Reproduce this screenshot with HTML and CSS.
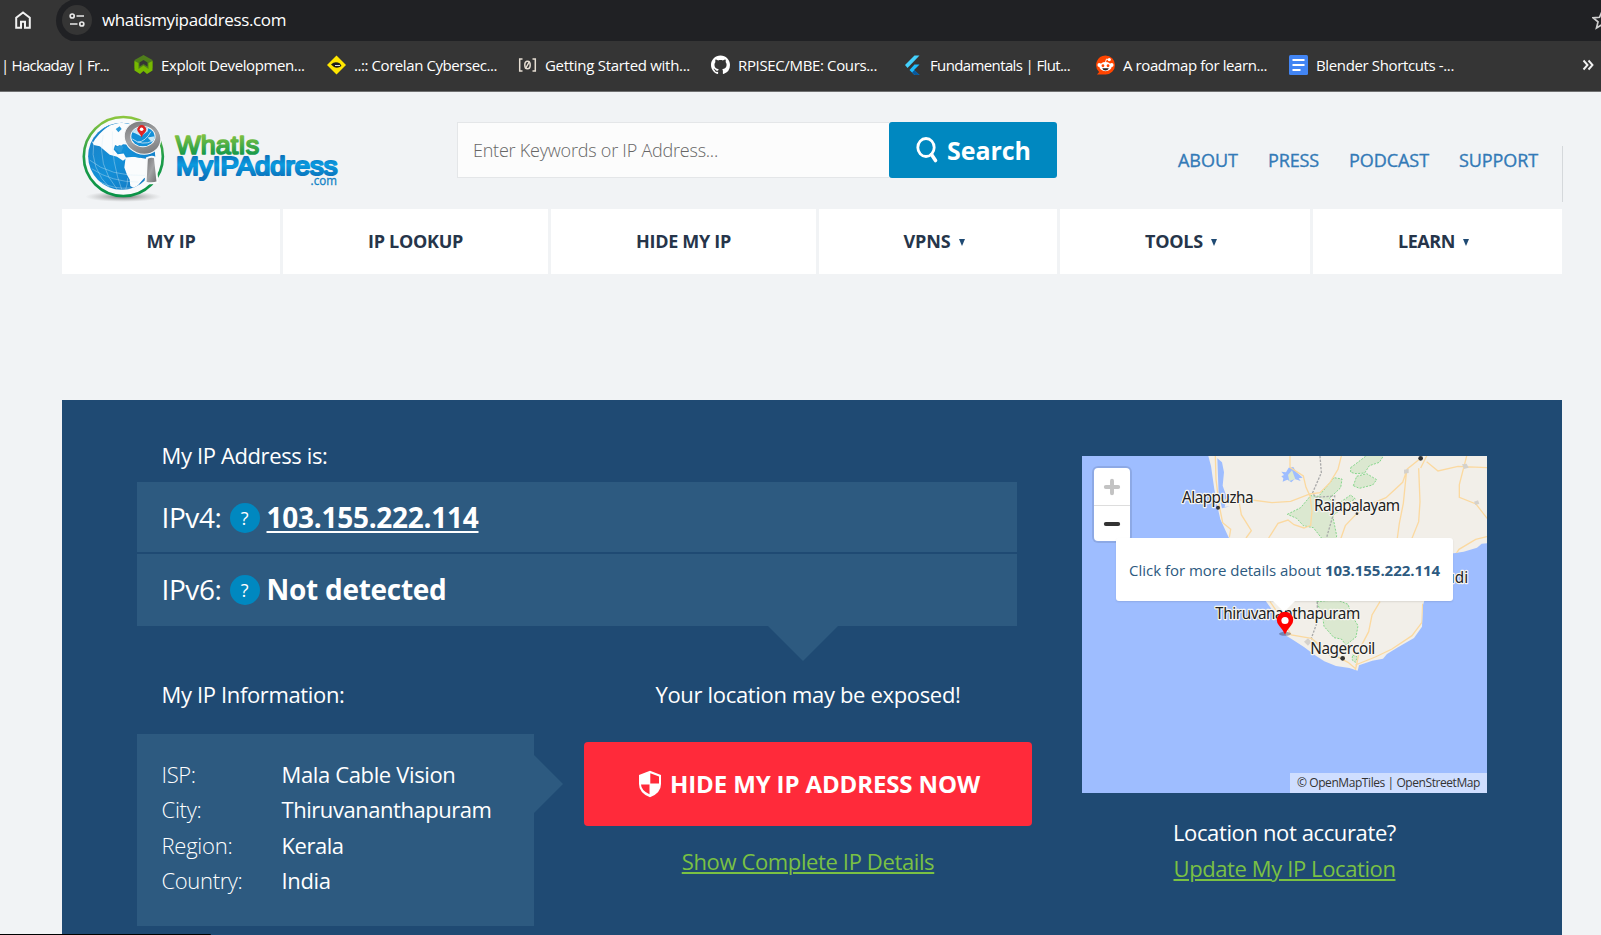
FILE: index.html
```html
<!DOCTYPE html>
<html lang="en">
<head>
<meta charset="utf-8">
<title>What Is My IP Address</title>
<link rel="stylesheet" href="styles.css">
</head>
<body>
<div class="toolbar">
  <svg class="home" viewBox="0 0 16 18"><path d="M1.2 16.8V6.8L8 1.5l6.800 5.300v10H10v-6H6v6z" fill="none" stroke="#f1f1f1" stroke-width="2"/></svg>
  <div class="omnibox">
    <span class="chip"><svg width="16" height="16" viewBox="0 0 16 16" fill="none" stroke="#e8e8e8" stroke-width="1.700"><circle cx="3.200" cy="4" r="2"/><path d="M7.500 4H15M1 12h7.500"/><circle cx="12.800" cy="12" r="2"/></svg></span>
    <span class="url"><span data-w="184">whatismyipaddress.com</span></span>
    <svg class="star" viewBox="0 0 20 20"><path d="M10 1.500l2.500 5.800 6.300.5-4.800 4.100 1.500 6.100L10 14.700 4.500 18 6 11.900 1.200 7.800l6.300-.5z" fill="none" stroke="#cfcfcf" stroke-width="1.700"/></svg>
  </div>
</div>
<div class="bookmarks">
  <div class="bm first"><span data-w="108">| Hackaday | Fr...</span></div>
  <div class="bm"><svg viewBox="0 0 19 20"><path d="M9.500 0L18.500 5v8l-4 3-5-5-5 5-4-3V5z" fill="#4f7d1b"/><path d="M.5 6L4.500 8v6l5-3.500 5 3.500V8l4-2v9.500L13 19l-3.500-3L6 19 .5 15.500z" fill="#77b900"/><path d="M5.500 7.500l4-2.500 4 2.500v4l-4-2.500-4 2.500z" fill="#353535"/></svg><span data-w="143.5">Exploit Developmen...</span></div>
  <div class="bm"><svg viewBox="0 0 19 20"><path d="M9.500.5L19 10l-9.500 9.500L0 10z" fill="#ffe600"/><path d="M4 9.500q4-4 9-1l1.500 2.500q-4 3-7.500 1z" fill="#1d1d1d"/><path d="M8 10.500h5" stroke="#ddd"/></svg><span data-w="143">..:: Corelan Cybersec...</span></div>
  <div class="bm"><svg viewBox="0 0 19 20" fill="none" stroke="#e6ded3" stroke-width="1.500"><path d="M4.500 4H1.700v12h2.800M14.500 4h2.800v12h-2.800M11.500 6.500l-4 7"/><ellipse cx="9.500" cy="10" rx="2.700" ry="3.800"/></svg><span data-w="145">Getting Started with...</span></div>
  <div class="bm"><svg viewBox="0 0 16 16"><path fill="#fff" d="M8 0C3.580 0 0 3.580 0 8c0 3.540 2.290 6.530 5.470 7.590.4.070.55-.17.55-.38 0-.19-.01-.82-.01-1.490-2.010.37-2.530-.49-2.690-.94-.09-.23-.48-.94-.82-1.130-.28-.15-.68-.52-.01-.53.63-.01 1.080.58 1.230.82.72 1.210 1.870.87 2.330.66.070-.52.28-.87.51-1.070-1.780-.2-3.640-.89-3.640-3.950 0-.87.31-1.590.82-2.150-.08-.2-.36-1.020.08-2.120 0 0 .67-.21 2.200.82.64-.18 1.320-.27 2-.27s1.360.09 2 .27c1.530-1.040 2.200-.82 2.200-.82.44 1.100.16 1.920.08 2.120.51.56.82 1.270.82 2.150 0 3.070-1.870 3.750-3.650 3.950.29.25.54.73.54 1.480 0 1.070-.01 1.930-.01 2.200 0 .21.15.46.55.38A8 8 0 0 0 16 8c0-4.420-3.580-8-8-8z"/></svg><span data-w="139">RPISEC/MBE: Cours...</span></div>
  <div class="bm flut"><svg viewBox="0 0 19 20"><path d="M11.500.5h5L4.500 13 2 10z" fill="#44d1fd"/><path d="M11.500 9.500h5L11 15l5.500 5h-5L6.500 15z" fill="#1fbcfd"/><path d="M9 17.500l2.500-2.500 5 5h-5z" fill="#08589c"/></svg><span data-w="140">Fundamentals | Flut...</span></div>
  <div class="bm"><svg viewBox="0 0 20 20"><path d="M10 0a10 10 0 0 1 0 20H1l2.300-2.700A10 10 0 0 1 10 0z" fill="#ff4500"/><circle cx="3.500" cy="10" r="2" fill="#fff"/><circle cx="16.500" cy="10" r="2" fill="#fff"/><circle cx="14" cy="4.300" r="1.700" fill="#fff"/><path d="M10 7l1-3.200 2.500.5" stroke="#fff" fill="none"/><ellipse cx="10" cy="11.700" rx="6.500" ry="4.800" fill="#fff"/><circle cx="7.300" cy="10.800" r="1.500" fill="#ff4500"/><circle cx="12.700" cy="10.800" r="1.500" fill="#ff4500"/><path d="M6.500 13.500h7q-1 2.300-3.500 2.300t-3.500-2.300z" fill="#222"/></svg><span data-w="144">A roadmap for learn...</span></div>
  <div class="bm"><svg viewBox="0 0 19 20"><rect width="19" height="20" rx="1.500" fill="#4285f4"/><path d="M3.500 5h12M3.500 10h12M3.500 15h8" stroke="#fff" stroke-width="2.200"/></svg><span data-w="138">Blender Shortcuts -...</span></div>
  <svg class="more" viewBox="0 0 12 12"><path d="M1.500 1.500L5.500 6l-4 4.500M6.500 1.500l4 4.500-4 4.500" fill="none" stroke="#f1f1f1" stroke-width="1.900"/></svg>
</div>

<div class="page">
  <header class="header">
    <svg class="logo" viewBox="90 60 780 265">
      <defs>
        <linearGradient id="ring" x1="0" y1="0" x2="0" y2="1"><stop offset="0" stop-color="#8cc63f"/><stop offset=".5" stop-color="#1f9d4a"/><stop offset="1" stop-color="#0a9347"/></linearGradient>
        <linearGradient id="sea" x1="0" y1="0" x2="1" y2="1"><stop offset="0" stop-color="#1c7fc4"/><stop offset=".5" stop-color="#1390d8"/><stop offset="1" stop-color="#1473bd"/></linearGradient>
        <linearGradient id="grn" gradientUnits="userSpaceOnUse" x1="0" y1="117" x2="0" y2="180"><stop offset="0" stop-color="#86c440"/><stop offset="1" stop-color="#14984a"/></linearGradient>
        <linearGradient id="blu" gradientUnits="userSpaceOnUse" x1="0" y1="184" x2="0" y2="258"><stop offset="0" stop-color="#0b75bd"/><stop offset=".35" stop-color="#0a9be0"/><stop offset=".85" stop-color="#0b72bb"/></linearGradient>
        <linearGradient id="gry" x1="0" y1="0" x2="1" y2="1"><stop offset="0" stop-color="#6f7072"/><stop offset=".5" stop-color="#a3a4a6"/><stop offset="1" stop-color="#6b6c6e"/></linearGradient>
        <radialGradient id="shd"><stop offset="0" stop-color="#555" stop-opacity=".8"/><stop offset="1" stop-color="#999" stop-opacity="0"/></radialGradient>
        <clipPath id="gl"><circle cx="214" cy="184" r="101"/></clipPath>
        <clipPath id="lens"><ellipse cx="278" cy="125" rx="35" ry="29"/></clipPath>
      </defs>
      <ellipse cx="219" cy="306" rx="115" ry="16" fill="url(#shd)"/>
      <circle cx="219" cy="185" r="119" fill="#f8fafb" stroke="url(#ring)" stroke-width="8"/>
      <circle cx="214" cy="184" r="101" fill="url(#sea)"/>
      <g clip-path="url(#gl)">
        <path d="M128 143Q140 118 176 92L210 82l40 8v60l-32-2-10 8-14-6-4 14 12 14 18-2 8 14-10 8-18-12-22-6-16-14-14-12-18-4-8-14z" fill="#fafcfd"/>
        <path d="M226 188l26-2 34 6 40 10v40l-44 8-28 32-14-8-2-20-8-14-8-22z" fill="#fafcfd"/>
        <path d="M196 102l12-8 6 8-10 10zM190 160l18-10 18 8-4 12-14 4z" fill="#2b9bd9"/>
        <path d="M216 172l6-14 8 22 40 6" fill="none" stroke="#1390d8" stroke-width="6"/>
        <path d="M120 138q20-34 56-46" fill="none" stroke="#2b9bd9" stroke-width="4"/>
        <g fill="none" stroke="#d4ecf8" stroke-width="1.600" opacity=".7"><path d="M118 196q60 50 170 46M124 222q60 40 140 40M150 262q40 22 90 18M130 140q-14 80 52 144M158 120q-20 90 44 166M186 110q-4 90 30 180M232 250q0 20-6 34"/></g>
      </g>
      <path d="M290 190q14-8 24-2l8 74q-14 6-36 2z" fill="url(#gry)" stroke="#f8fafb" stroke-width="6"/>
      <ellipse cx="277" cy="128" rx="56" ry="49" transform="rotate(22 277 128)" fill="url(#gry)" stroke="#f8fafb" stroke-width="3"/>
      <ellipse cx="278" cy="125" rx="38" ry="32" fill="#f8fafb"/>
      <ellipse cx="278" cy="125" rx="35" ry="29" fill="#1390d8"/>
      <g clip-path="url(#lens)"><path d="M240 110l30-18 26 2-4 16-20 14-16-8zM292 128l22-4v16l-12-2z" fill="#c5e7f7"/><path d="M246 132q30 22 62 6M262 142q24-2 40-32" fill="none" stroke="#fff" stroke-width="2"/></g>
      <path d="M274 128q-4-10-9-15a13 13 0 1 1 19 0q-6 5-10 15z" fill="#e02222"/><circle cx="274" cy="103" r="5.500" fill="#fff"/>
      <g font-family="'Liberation Sans',Arial,sans-serif" stroke-linejoin="round">
        <text x="376" y="176" font-size="78" textLength="252" lengthAdjust="spacingAndGlyphs" fill="url(#grn)" stroke="url(#grn)" stroke-width="5">WhatIs</text>
        <text x="378" y="241" font-size="78" textLength="486" lengthAdjust="spacingAndGlyphs" fill="url(#blu)" stroke="url(#blu)" stroke-width="6.500">MyIPAddress</text>
      </g>
      <text x="783" y="272" font-size="36" font-family="'Open Sans',sans-serif" textLength="79" lengthAdjust="spacingAndGlyphs" fill="#1583c5" stroke="#1583c5">.com</text>
    </svg>
    <div class="search">
      <div class="field"><span data-w="245">Enter Keywords or IP Address...</span></div>
      <div class="go"><svg viewBox="0 0 22 26"><ellipse cx="10" cy="10.500" rx="8.200" ry="9" fill="none" stroke="#fff" stroke-width="2.800"/><path d="M15.500 17.500l4 6" stroke="#fff" stroke-width="3.600" stroke-linecap="round"/></svg><span data-w="84">Search</span></div>
    </div>
    <div class="links"><span data-w="60">ABOUT</span><span data-w="51">PRESS</span><span data-w="80">PODCAST</span><span data-w="79">SUPPORT</span></div>
  </header>
  <nav class="nav">
    <div><span data-w="49">MY IP</span></div>
    <div><span data-w="95">IP LOOKUP</span></div>
    <div><span data-w="95">HIDE MY IP</span></div>
    <div class="drop"><span data-w="47">VPNS</span><i></i></div>
    <div class="drop"><span data-w="58">TOOLS</span><i></i></div>
    <div class="drop"><span data-w="57">LEARN</span><i></i></div>
  </nav>

  <main class="panel">
    <div class="left">
      <h2><span data-w="166">My IP Address is:</span></h2>
      <div class="ips">
        <div class="ip"><span class="k" data-w="60">IPv4:</span><span class="q">?</span><span class="v u" data-w="212">103.155.222.114</span></div>
        <div class="ip"><span class="k" data-w="60">IPv6:</span><span class="q">?</span><span class="v" data-w="180">Not detected</span></div>
      </div>
      <div class="lower">
        <div class="infocol">
          <h2><span data-w="183">My IP Information:</span></h2>
          <div class="info">
            <span class="t"><span data-w="34">ISP:</span></span><span><span data-w="174">Mala Cable Vision</span></span>
            <span class="t"><span data-w="40">City:</span></span><span><span data-w="210">Thiruvananthapuram</span></span>
            <span class="t"><span data-w="71">Region:</span></span><span><span data-w="62">Kerala</span></span>
            <span class="t"><span data-w="81">Country:</span></span><span><span data-w="49">India</span></span>
          </div>
        </div>
        <div class="hide">
          <h2><span data-w="305">Your location may be exposed!</span></h2>
          <div class="cta"><svg viewBox="0 0 24 28"><path d="M12 .8L23 5v9q0 9-11 13.300Q1 23 1 14V5z" fill="#fff"/><path d="M12.300 3.200L21 6.400v7.100h-8.700zM3 14.500h8.500v9.800Q3.200 20.500 3 14.500z" fill="#ff2a3a"/></svg><span data-w="310">HIDE MY IP ADDRESS NOW</span></div>
          <div class="more-link"><span data-w="252.500">Show Complete IP Details</span></div>
        </div>
      </div>
    </div>
    <div class="right">
      <div class="map">
        <svg class="tiles" viewBox="36 33 1215 1011">
          <defs><clipPath id="land"><path id="coast" d="M415 33l8 30 10 70 9 50 9 40 24 52 50 90 60 100 40 55 24 52 24 15 30 20 30 22 30 20 35 14 40 6 25 8 4-16 40-14 32-6 12-14 33-20 48-28 24-34 3-65 22-70 60-84 40-6 40-12 14-12 26-2V33z"/></clipPath></defs>
          <rect x="36" y="33" width="1215" height="1011" fill="#9ebdff"/>
          <use href="#coast" fill="#f2efe9"/>
          <g clip-path="url(#land)">
            <g fill="#dbe8d0" stroke="#86d68c" stroke-width="3" stroke-dasharray="6 4">
              <path d="M652 208l40-20 30-36 24 2 46-56 24 4-4 26-34 32 20 20 24-16 20-14 14 12-20 10-32 28-16 12 12 60-4 24-36-10-30-38-30-6-20-22z"/>
              <path d="M842 68l24-18 26-20h50l-14 22-30 10-14 22-26 2-16-4zM850 122l10-28 30-8 30 18-12 16-40 10z"/>
              <path d="M740 470l60-6 34 14 12 34 18 30-6 34-30 24-14-18-22-4-30-34-4-30zM848 630l14 6-6 16-10-8z"/>
            </g>
            <path d="M634 80l14 2 8-14 14-2 8 14 20 18-12 2 6 8-18-6-10 10-12-8-14 6 2-10-6-6 8-4z" fill="#9ebdff"/><path d="M654 90l12-14 10 26-18 6z" fill="#dbe8d0"/>
            <path d="M442 40l14 12 6 30-4 40 12 34-6 30 16-2-24 6-10-40z" fill="#9ebdff"/>
            <path d="M750 33l4 50-26 60 8 14 58-4-2 48-22 76M742 470v60l-18 50 12 12" fill="none" stroke="#aaa" stroke-width="4" stroke-dasharray="7 4"/>
            <g fill="none" stroke="#fbd9a0" stroke-width="4">
              <path d="M436 33l2 70 10 80 10 50 24 20-4 24M446 165h100l60 8 56-4 58-22 30-4 30-30 24-40 10-40M660 33v34l40 26 8 34 12 26 6 44-4 44-20 8-30-10-18-14-30 10-28 44M508 175l6 34 30 48-16 22M1052 40l-40 32-14 40-50 46-62 26-26 22-34 36-14 40M1010 75l-10 100-12 60-6 44M1046 70l4 100-4 60-20 50M1070 50l34 28 60-14 88 4M1190 33l-22 86v38l50 20 34 44M1251 275l-34 8-50 30-20 30M1070 33l-18 36"/>
              <path d="M600 470l28 40 36 60 60 10 60 46 50 26 24 20M930 470l-24 40-10 50-26 50-14 66M856 660l60-24 50-24 60-40 30-40 2-56M730 586l50 46 44 8"/>
            </g>
            <g fill="#d4d1cc"><path d="M702 590l12-10 10 10-10 12zM1176 58l14-2 6 12-14 4zM1002 74l14-2v12l-14 2zM1212 170l12-4 4 10-12 4z"/></g>
          </g>
          <g fill="#333"><circle cx="1052" cy="40" r="7"/><circle cx="444" cy="188" r="6"/><circle cx="861" cy="206" r="4"/><circle cx="818" cy="640" r="7"/></g>
          <g font-family="'Noto Sans',sans-serif" font-size="46" fill="#222" stroke="#f7f5f0" stroke-width="7" stroke-linejoin="round" paint-order="stroke">
            <text x="336" y="174" textLength="215">Alappuzha</text>
            <text x="732" y="198" textLength="258">Rajapalayam</text>
            <text x="1126" y="414">udi</text>
            <text x="436" y="523" textLength="435">Thiruvananthapuram</text>
            <text x="721" y="626" textLength="195">Nagercoil</text>
          </g>
        </svg>
        <div class="zoomer"><div><svg viewBox="0 0 16 16"><path d="M8 2.500v11M2.500 8h11" stroke="#c3c3c3" stroke-width="3.500" stroke-linecap="round"/></svg></div><div><svg viewBox="0 0 16 16"><path d="M2.500 8h11" stroke="#333" stroke-width="3.500" stroke-linecap="round"/></svg></div></div>
        <svg class="pin" viewBox="0 0 18 24"><ellipse cx="9" cy="21.800" rx="6" ry="2" fill="#334" opacity=".4"/><path d="M9 22.500Q7 18 3 13.500a8.200 8.200 0 1 1 12 0Q11 18 9 22.500z" fill="#f00"/><circle cx="9" cy="8.500" r="3.600" fill="#fff"/></svg>
        <div class="popup"><span data-w="192">Click for more details about</span><b data-w="115">103.155.222.114</b></div>
        <div class="credit"><span data-w="183">© OpenMapTiles | OpenStreetMap</span></div>
      </div>
      <p><span data-w="223">Location not accurate?</span></p>
      <p class="update"><span data-w="222">Update My IP Location</span></p>
    </div>
  </main>
</div>
<div class="status"></div>
<script src="fit.js"></script>
</body>
</html>
```

FILE: styles.css
```css
* { box-sizing: border-box; }
html, body { margin: 0; height: 935px; overflow: hidden; }
body { background: #f1f3f5; font-family: "Open Sans", "Noto Sans", sans-serif; color: #fff; }
h2, p { margin: 0; font-size: 22px; font-weight: 400; line-height: 30px; }
svg { display: block; flex: none; }
span, b { white-space: nowrap; }

.toolbar { display: flex; height: 41px; background: #353535; padding-left: 15px; align-items: center; overflow: hidden; }
.home { width: 16px; height: 18px; margin-top: -1px; }
.omnibox { flex: none; width: 1556px; margin-left: 25px; height: 43px; display: flex; align-items: center; background: #202124; border-radius: 22px 0 0 22px; padding: 0 0 1px 6px; }
.chip { width: 30px; height: 30px; border-radius: 50%; background: #353535; display: flex; align-items: center; justify-content: center; }
.url { margin-left: 10px; font-size: 17px; line-height: 24px; }
.star { width: 20px; height: 20px; margin-left: 1306px; }

.bookmarks { display: grid; grid-template-columns: 131px 193px 191px 193px 194px 191px 193px 293px 12px; align-items: center; height: 51px; padding: 0 0 2px 3px; background: #353535; border-bottom: 1px solid #6f7071; font-size: 15px; }
.bm { display: flex; align-items: center; gap: 8px; line-height: 22px; }
.first, .flut { margin-left: -2px; }
.bm svg { width: 19px; height: 20px; }
.more { width: 12px; height: 12px; }

.page { width: 1501px; margin-left: 62px; }
.header { display: flex; height: 117px; }
.logo { width: 260px; height: 88px; margin: 23px 0 0 18px; }
.search { display: flex; width: 600px; height: 56px; margin: 30px 0 0 117px; }
.field { width: 432px; border: 1px solid #e4e6e8; border-right: 0; background: #fcfcfc; padding: 1px 0 0 15px; font-size: 18px; font-weight: 300; line-height: 52px; color: #666; }
.go { flex: 1; display: flex; align-items: center; background: #0088c0; border-radius: 3px; padding-left: 27px; font-size: 25px; font-weight: 700; }
.go svg { width: 22px; height: 26px; margin: 0 9px 0 0; }
.links { display: flex; gap: 30px; height: 56px; margin-top: 54px; margin-left: 121px; width: 385px; border-right: 1px solid #d5d8db; color: #337ab7; font-size: 18px; font-weight: 400; line-height: 29px; -webkit-text-stroke: .35px #337ab7; }

.nav { display: grid; grid-template-columns: 218px 265px 265px 238px 250px 249px; gap: 3px; width: 1500px; height: 65px; color: #26354a; font-size: 18px; font-weight: 700; }
.nav div { background: #fff; display: flex; align-items: center; justify-content: center; padding-bottom: 2px; }
.nav .drop { padding-right: 8px; }
.nav i { width: 0; height: 0; margin: 3px 0 0 8px; border: 3.5px solid transparent; border-top: 7px solid #1f4a73; border-bottom: 0; }

.panel { display: flex; width: 1500px; height: 560px; margin-top: 126px; background: #1f4a73; padding-left: 75px; }
.left { width: 895px; padding-top: 40px; }
.left h2 { padding-left: 24.5px; }
.ips { position: relative; width: 880px; margin-top: 12px; display: grid; grid-template-rows: 70px 72px; gap: 2px; }
.ips::after { content: ""; position: absolute; left: 631px; top: 144px; border: 35px solid transparent; border-top-color: #2d5a80; border-bottom: 0; }
.ip { background: #2d5a80; display: flex; align-items: center; padding-left: 24.5px; padding-bottom: 1px; font-size: 28px; }
.ip + .ip { padding-bottom: 3px; }
.k { width: 60px; font-weight: 400; }
.q { width: 30px; height: 30px; margin: 2px 7px 0 8px; border-radius: 50%; background: #0088c0; font-size: 18px; line-height: 30px; text-align: center; }
.v { font-weight: 700; }
.u { text-decoration: underline; text-decoration-thickness: 2px; text-underline-offset: 3px; }
.lower { display: flex; margin-top: 53px; }
.infocol { width: 397px; }
.info { position: relative; height: 192px; margin-top: 25px; background: #2d5a80; padding: 23px 0 0 24.5px; display: grid; grid-template-columns: 120px 1fr; grid-auto-rows: 35.3px; font-size: 22px; line-height: 34px; }
.info::after { content: ""; position: absolute; left: 397px; top: 21px; border: 29px solid transparent; border-left-color: #2d5a80; border-right: 0; }
.t { font-weight: 300; }
.hide { width: 448px; margin-left: 50px; text-align: center; }
.hide h2 { padding: 0; }
.cta { display: flex; align-items: center; height: 84px; margin-top: 33px; padding: 0 0 2px 54px; background: #ff2a3a; border-radius: 4px; font-size: 24px; font-weight: 700; }
.cta svg { width: 24px; height: 28px; margin: 1px 8px 0 0; }
.more-link { margin-top: 20px; font-size: 22px; line-height: 30px; }
.more-link span, .update span { color: #7ac143; text-decoration: underline; text-decoration-thickness: 2px; text-underline-offset: 2px; }

.right { width: 405px; margin-left: 50px; padding-top: 56px; text-align: center; }
.map { position: relative; height: 337px; margin-bottom: 24px; overflow: hidden; }
.tiles { width: 405px; height: 337px; }
.zoomer { position: absolute; left: 12px; top: 12px; width: 36px; height: 73px; border-radius: 4px; background: #fff; box-shadow: 0 0 0 2px rgba(0,0,0,.1); }
.zoomer div { height: 37px; display: flex; align-items: center; justify-content: center; }
.zoomer div + div { height: 36px; border-top: 1px solid #ddd; }
.zoomer svg { width: 18px; height: 18px; }
.popup { position: absolute; left: 34px; top: 82px; width: 337px; height: 63px; display: flex; align-items: center; gap: 4px; padding-left: 13px; background: #fff; border-radius: 3px; box-shadow: 0 1px 2px rgba(0,0,0,.1); color: #2d5a80; font-size: 15px; }
.popup::after { content: ""; position: absolute; left: 157px; top: 63px; border: 11px solid transparent; border-top-color: #fff; border-bottom: 0; }
.pin { position: absolute; left: 193.5px; top: 156px; width: 18px; height: 24px; z-index: 2; }
.credit { position: absolute; right: 0; bottom: 0; width: 197px; height: 20px; padding-left: 7px; background: rgba(255,255,255,.5); color: #333; font-size: 12px; line-height: 20px; text-align: left; }
.update { margin-top: 6px; }
.status { position: absolute; left: 0; top: 934px; width: 211px; height: 1px; background: #000; border-top-right-radius: 2px; }
```

FILE: fit.js
```js
// Track each label so that it fills the width given in data-w.
document.querySelectorAll('[data-w]').forEach(function (el) {
  el.style.display = 'inline-block';
  el.style.width = 'auto';
  var target = parseFloat(el.dataset.w);
  var n = el.textContent.length;
  var width = el.getBoundingClientRect().width;
  el.style.letterSpacing = ((target - width) / n).toFixed(3) + 'px';
});
```
